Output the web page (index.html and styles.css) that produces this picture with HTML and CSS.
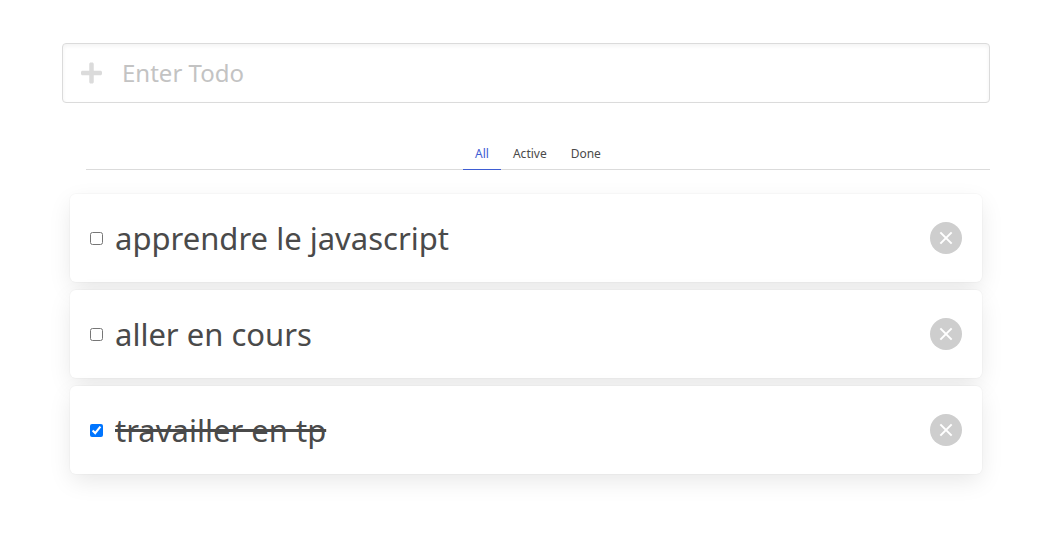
FILE: index.html
```html
<!DOCTYPE html>
<html lang="fr">
<head>
<meta charset="utf-8">
<meta name="viewport" content="width=device-width, initial-scale=1">
<title>Todo</title>
<link rel="stylesheet" href="styles.css">
</head>
<body>
<main class="app">
  <form class="field">
    <svg class="plus" viewBox="0 0 448 512" aria-hidden="true"><path fill="currentColor" d="M416 208H272V64c0-17.67-14.33-32-32-32h-32c-17.67 0-32 14.33-32 32v144H32c-17.67 0-32 14.33-32 32v32c0 17.67 14.33 32 32 32h144v144c0 17.67 14.33 32 32 32h32c17.67 0 32-14.33 32-32V304h144c17.67 0 32-14.33 32-32v-32c0-17.67-14.33-32-32-32z"/></svg>
    <input class="input" type="text" placeholder="Enter Todo" aria-label="Enter Todo">
  </form>
  <nav class="tabs">
    <a class="tab active" href="#all">All</a>
    <a class="tab" href="#active">Active</a>
    <a class="tab" href="#done">Done</a>
  </nav>
  <ul class="list">
    <li class="card">
      <label class="todo"><input class="check" type="checkbox"><span class="text">apprendre le javascript</span></label>
      <button class="delete" type="button" aria-label="Delete"></button>
    </li>
    <li class="card">
      <label class="todo"><input class="check" type="checkbox"><span class="text">aller en cours</span></label>
      <button class="delete" type="button" aria-label="Delete"></button>
    </li>
    <li class="card">
      <label class="todo"><input class="check" type="checkbox" checked><span class="text">travailler en tp</span></label>
      <button class="delete" type="button" aria-label="Delete"></button>
    </li>
  </ul>
</main>
</body>
</html>
```
FILE: styles.css
```css
* { box-sizing: border-box; }
body {
  margin: 0;
  background: #fff;
  color: #4a4a4a;
  font-family: "Noto Sans", "Open Sans", sans-serif;
}
.app { padding: 43px 47px 43px 62px; }
.field {
  display: flex;
  align-items: center;
  height: 60px;
  padding-left: 18px;
  border: 1px solid #dbdbdb;
  border-radius: 4px;
  box-shadow: inset 0 2px 4px rgba(10, 10, 10, 0.05);
}
.plus { width: 21px; height: 24px; color: #dbdbdb; flex: none; }
.input {
  flex: 1;
  min-width: 0;
  height: 100%;
  margin: 0;
  padding: 0 20px 1px;
  border: 0;
  outline: 0;
  background: transparent;
  color: #363636;
  font: inherit;
  font-size: 24px;
}
.input::placeholder { color: #c3c3c3; opacity: 1; }
.tabs {
  display: flex;
  justify-content: center;
  margin: 35px 0 24px 24px;
  font-size: 12px;
  line-height: 18px;
  box-shadow: inset 0 -1px #dbdbdb;
}
.tab {
  padding: 7px 12px 6px;
  border-bottom: 1px solid transparent;
  color: #4a4a4a;
  text-decoration: none;
}
.tab.active { border-color: #3e5dd3; color: #3e5dd3; }
.list {
  display: grid;
  gap: 8px;
  margin: 0;
  padding: 0 8px;
  list-style: none;
}
.card {
  display: flex;
  align-items: center;
  justify-content: space-between;
  padding: 20px;
  border-radius: 6px;
  background: #fff;
  box-shadow: 0 8px 24px -2px rgba(10, 10, 10, 0.1), 0 0 0 1px rgba(10, 10, 10, 0.02);
}
.todo { display: flex; align-items: center; gap: 12px; }
.check { width: 13px; height: 13px; margin: 0; }
.text { font-size: 31px; line-height: 48px; }
.check:checked + .text { text-decoration: line-through; }
.delete {
  display: grid;
  place-items: center;
  width: 32px;
  height: 32px;
  padding: 0;
  border: 0;
  border-radius: 50%;
  background: #cecece;
}
.delete::before,
.delete::after {
  content: "";
  grid-area: 1 / 1;
  width: 16px;
  height: 2px;
  background: #fff;
  transform: rotate(45deg);
}
.delete::after { transform: rotate(-45deg); }
```
